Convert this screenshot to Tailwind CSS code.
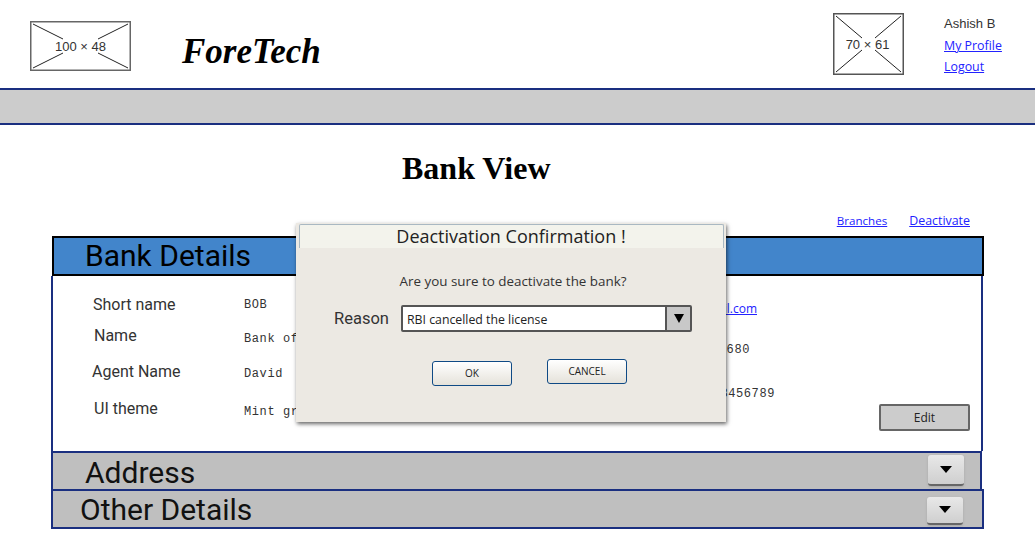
<!DOCTYPE html>
<html lang="en">
  <head>
    <meta charset="UTF-8" />
    <title>Bank View</title>
    <script src="https://cdn.jsdelivr.net/npm/@tailwindcss/browser@4"></script>
  </head>
  <body class="relative w-[1035px] h-[545px] overflow-hidden bg-white font-['Roboto',sans-serif]">
    <!-- header -->
    <header class="flex h-[88px]">
      <div class="ml-[30px] mt-[21px] w-[101px] h-[50px] relative">
        <svg width="101" height="50" class="block">
          <rect x="0.75" y="0.75" width="99.5" height="48.5" fill="#fff" stroke="#666" stroke-width="1.5" />
          <path d="M3 3 L33 18 M98 3 L68 18 M3 47 L33 32 M98 47 L68 32" stroke="#222" />
        </svg>
        <span class="absolute inset-0 flex items-center justify-center pt-px text-[13px] text-[#333] font-['Liberation_Sans',sans-serif]">100 × 48</span>
      </div>
      <div class="ml-[51px] mt-[29px] h-[46px] font-['Liberation_Serif',serif] font-bold italic text-[35px] leading-[46px] text-black">ForeTech</div>
      <div class="ml-auto mt-[13px] w-[71px] h-[63px] relative">
        <svg width="71" height="63" class="block">
          <rect x="0.75" y="0.75" width="69.5" height="60.5" fill="#fff" stroke="#555" stroke-width="1.5" />
          <path d="M3 3 L29 25 M68 3 L42 25 M3 59 L29 37 M68 59 L42 37" stroke="#222" />
        </svg>
        <span class="absolute inset-0 flex items-center justify-center pr-[2px] text-[13px] text-[#333] font-['Liberation_Sans',sans-serif]">70 × 61</span>
      </div>
      <div class="ml-[40px] w-[91px] mt-[15px] flex flex-col text-[12.4px]">
        <span class="h-[17px] leading-[17px] text-[13px] text-[#333] font-['Liberation_Sans',sans-serif]">Ashish B</span>
        <a href="#" class="mt-[5px] h-[17px] leading-[17px] underline text-[#2222ff] font-['Open_Sans',sans-serif]">My Profile</a>
        <a href="#" class="mt-[4px] h-[17px] leading-[17px] underline text-[#2222ff] font-['Open_Sans',sans-serif]">Logout</a>
      </div>
    </header>

    <div class="h-[37px] bg-[#cccccc] border-y-2 border-[#1a2f80]"></div>

    <h1 class="mt-[24px] ml-[402px] h-[38px] font-['Liberation_Serif',serif] font-bold text-[32px] leading-[38px] text-black">Bank View</h1>

    <div class="mt-[27px] h-[22px] flex justify-end pr-[65px] gap-[22px] leading-[14px] font-['Open_Sans',sans-serif]">
      <a href="#" class="underline text-[#2222ff] text-[11.6px]">Branches</a>
      <a href="#" class="underline text-[#2222ff] text-[12.4px]">Deactivate</a>
    </div>

    <!-- bank details panel -->
    <section class="ml-[51px] w-[933px]">
      <div class="ml-px h-[40px] bg-[#4285cb] border-2 border-black pl-[31px] text-[30px] leading-[36px] text-black">Bank Details</div>
      <div class="w-[932px] h-[175px] border-x-2 border-[#1a2f80] relative text-[16px] text-[#333]">
        <div class="flex h-[30px] pt-[14px] box-content">
          <span class="ml-[40px] w-[151px] leading-[30px]">Short name</span>
          <span class="font-['Liberation_Mono',monospace] text-[12px] tracking-[0.6px] leading-[30px]">BOB</span>
          <a href="#" class="ml-auto mr-[224px] mt-[10px] text-[12px] underline text-[#2222ff] font-['Open_Sans',sans-serif]">bob@gmail.com</a>
        </div>
        <div class="flex h-[36px] mt-[1px]">
          <span class="ml-[41px] w-[150px] leading-[30px]">Name</span>
          <span class="font-['Liberation_Mono',monospace] text-[12px] tracking-[0.6px] leading-[36px]">Bank of Baroda</span>
          <span class="ml-auto mr-[231px] mt-[11px] font-['Liberation_Mono',monospace] text-[12px] tracking-[0.6px] leading-[36px]">9876543680</span>
        </div>
        <div class="flex h-[36px]">
          <span class="ml-[39px] w-[152px] leading-[30px]">Agent Name</span>
          <span class="font-['Liberation_Mono',monospace] text-[12px] tracking-[0.6px] leading-[34px]">David</span>
          <span class="ml-auto mr-[206px] mt-[22px] font-['Liberation_Mono',monospace] text-[12px] tracking-[0.6px] leading-[30px]">123456789</span>
        </div>
        <div class="flex h-[36px] mt-[1px]">
          <span class="ml-[41px] w-[150px] leading-[30px]">UI theme</span>
          <span class="font-['Liberation_Mono',monospace] text-[12px] tracking-[0.6px] leading-[36px]">Mint green</span>
          <button class="ml-auto mr-[11px] mt-[10px] w-[91px] h-[27px] bg-[#cccccc] border-2 border-[#666] rounded-[2px] text-[12px] text-[#222] font-['Open_Sans',sans-serif]">Edit</button>
        </div>
      </div>
      <div class="flex items-center w-[931px] h-[40px] bg-[#bfbfbf] border-2 border-[#1a2f80] pl-[32px] text-[30px] text-[#111]">
        <span class="mt-[2px]">Address</span>
        <span class="ml-auto mr-[16px] -mt-[2px] w-[36px] h-[31px] flex items-center justify-center bg-gradient-to-b from-[#e8e8e8] to-[#cfcfcf] border-b-2 border-[#666] rounded-[3px] shadow-sm">
          <svg width="12" height="7"><path d="M0 0 H12 L6 7 Z" fill="#000" /></svg>
        </span>
      </div>
      <div class="-mt-[2px] flex items-center h-[40px] bg-[#bfbfbf] border-2 border-[#1a2f80] pl-[27px] text-[30px] text-[#111]">
        <span class="mt-px">Other Details</span>
        <span class="ml-auto mr-[19px] mt-[3px] w-[36px] h-[28px] flex items-center justify-center bg-gradient-to-b from-[#e8e8e8] to-[#cfcfcf] border-b-2 border-[#666] rounded-[3px] shadow-sm">
          <svg width="12" height="7"><path d="M0 0 H12 L6 7 Z" fill="#000" /></svg>
        </span>
      </div>
    </section>

    <!-- deactivate dialog -->
    <div class="absolute left-[296px] top-[223px] w-[430px] h-[199px] bg-[#ece9e3] shadow-[1px_2px_4px_rgba(0,0,0,0.6)] flex flex-col items-center">
      <div class="mt-px w-[425px] h-[24px] bg-[#f3f3ec] border-x border-t border-[#a9b8c2] rounded-t-[2px] text-center text-[18px] leading-[22px] text-[#222] font-['Open_Sans',sans-serif]">Deactivation Confirmation !</div>
      <p class="mt-[23px] ml-[4px] h-[20px] text-[13.4px] leading-[20px] text-[#333] font-['Open_Sans',sans-serif]">Are you sure to deactivate the bank?</p>
      <div class="mt-[14px] self-start flex items-center">
        <span class="ml-[38px] mt-[2px] w-[67px] text-[16.5px] text-[#333]">Reason</span>
        <div class="w-[291px] h-[27px] flex bg-white border-2 border-[#555] rounded-[2px]">
          <span class="flex-1 pl-[4px] text-[12.3px] leading-[26px] text-[#222] font-['Open_Sans',sans-serif]">RBI cancelled the license</span>
          <span class="w-[25px] flex items-center justify-center bg-[#c8c8c8] border-l-2 border-[#555]">
            <svg width="10" height="9"><path d="M0 0 H10 L5 9 Z" fill="#000" /></svg>
          </span>
        </div>
      </div>
      <div class="mt-[27px] self-start flex items-start">
        <button class="ml-[136px] mt-[2px] w-[80px] h-[25px] rounded-[3px] border border-[#0f4a85] bg-gradient-to-b from-white to-[#e5e2da] text-[10px] text-[#222] font-['Open_Sans',sans-serif]">OK</button>
        <button class="ml-[35px] w-[80px] h-[25px] rounded-[3px] border border-[#0f4a85] bg-gradient-to-b from-white to-[#e5e2da] text-[10px] text-[#222] font-['Open_Sans',sans-serif]">CANCEL</button>
      </div>
    </div>
  </body>
</html>
